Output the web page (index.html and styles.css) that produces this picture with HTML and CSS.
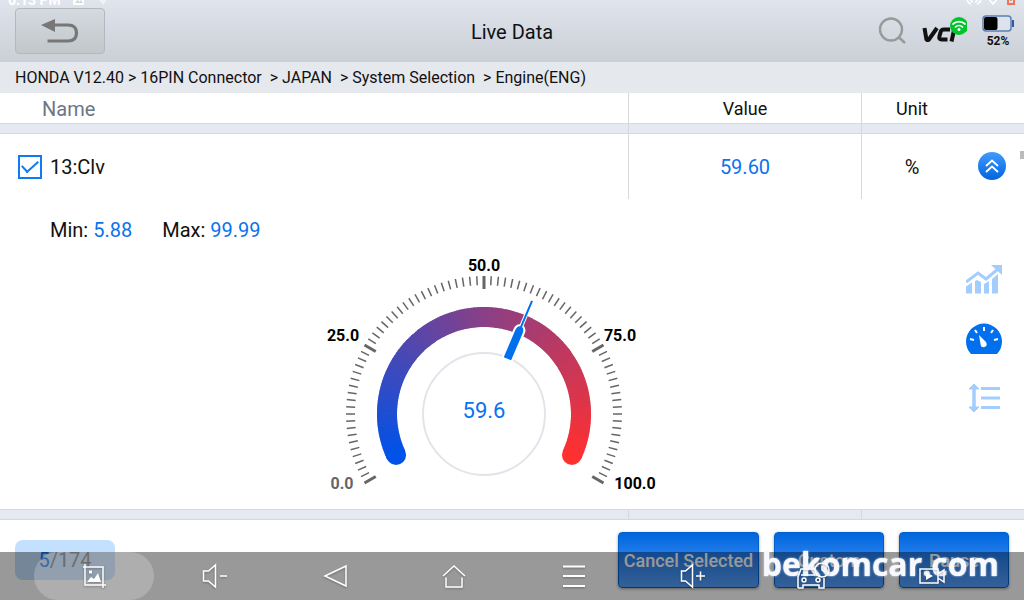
FILE: index.html
```html
<!DOCTYPE html>
<html lang="en">
<head>
<meta charset="utf-8">
<title>Live Data</title>
<link rel="stylesheet" href="styles.css">
</head>
<body>
<div class="app">
  <header class="topbar">
    <div class="status" aria-hidden="true">
      <span class="status-left">6:13 PM
        <svg width="12" height="14" viewBox="0 0 12 14"><rect x="0" y="1" width="11" height="12" rx="1" fill="#fff"/><path d="M2 11l2.500-3 2 2 1.500-2 2 3z" fill="#cfd5df"/></svg>
        <svg width="12" height="14" viewBox="0 0 12 14"><path d="M0 5a9 9 0 0 1 12 0L6 13z" fill="#fff" opacity=".5"/></svg>
      </span>
      <span class="status-right">
        <svg width="54" height="14" viewBox="0 0 54 14" fill="none" stroke="#fff" stroke-width="1.500"><path d="M5 6q0 5 4 6M8 6q0 3 3 4M19 6q0 5-4 6M16 6q0 3-3 4M26 6l5 6 5-6"/><rect x="46" y="2" width="6" height="10" stroke="#f0744f" stroke-width="2"/><path d="M49 5v4" stroke="#f0744f"/></svg>
      </span>
    </div>
    <button class="back" type="button" aria-label="Back">
      <svg width="38" height="26" viewBox="0 0 38 26"><path d="M13 7h14q8.500 0 8.500 8t-8.500 8H6.500" fill="none" stroke="#777" stroke-width="3.200"/><path d="M0 7L14 1v13z" fill="#777"/></svg>
    </button>
    <h1 class="title">Live Data</h1>
    <div class="tools">
      <button class="plain" type="button" aria-label="Search">
        <svg width="28" height="28" viewBox="0 0 28 28" fill="none" stroke="#999" stroke-width="2.400"><circle cx="13" cy="12.500" r="11"/><path d="M20.500 20l6.500 6"/></svg>
      </button>
      <div class="vci" role="img" aria-label="VCI connected">
        <svg width="46" height="30" viewBox="0 0 46 30"><g fill="none" stroke="#111" stroke-width="4"><path d="M3.500 12l2 12h2L16 12" stroke-linejoin="bevel"/><path d="M29 13.500h-6q-3 0-3.500 3l-1 3.500q-1 3.500 2 3.500h6"/><path d="M33.500 12l-3 13.500"/></g><circle cx="38" cy="10" r="9" fill="#00c42b"/><g fill="none" stroke="#fff" stroke-width="1.700" stroke-linecap="round"><path d="M32 8a9 9 0 0 1 12 0M34.500 11a5 5 0 0 1 7 0"/></g><circle cx="38" cy="13.500" r="1.500" fill="#fff"/></svg>
      </div>
      <div class="battery">
        <svg width="32" height="17" viewBox="0 0 32 17"><rect x="1" y="1" width="28" height="15" rx="3" fill="#dde3ec" stroke="#5e7fb0" stroke-width="1.500"/><rect x="30" y="5" width="2" height="7" fill="#345b98"/><rect x="2" y="2" width="13.500" height="13" rx="2"/></svg>
        <span>52%</span>
      </div>
    </div>
  </header>
  <nav class="crumbs" aria-label="Path">HONDA V12.40 &gt; 16PIN Connector  &gt; JAPAN  &gt; System Selection  &gt; Engine(ENG)</nav>
  <main class="content">
    <table class="data">
      <colgroup><col><col class="c-value"><col class="c-unit"><col class="c-more"></colgroup>
      <thead>
        <tr class="head"><th class="name">Name</th><th class="line">Value</th><th class="line">Unit</th><th></th></tr>
      </thead>
      <tbody>
        <tr class="strip"><td></td><td class="line"></td><td class="line"></td><td></td></tr>
        <tr class="item">
          <td><label class="pick"><input type="checkbox" checked><span>13:Clv</span></label></td>
          <td class="line num">59.60</td>
          <td class="line">%</td>
          <td class="more-cell"><button class="plain more" type="button" aria-label="Collapse">
            <svg width="28" height="28" viewBox="0 0 28 28"><defs><linearGradient id="mg" x2="0" y2="1"><stop stop-color="#429aff"/><stop offset="1" stop-color="#0065dd"/></linearGradient></defs><circle cx="14" cy="14" r="14" fill="url(#mg)"/><path d="M8 14l6-5.500 6 5.500M8 20l6-5.500 6 5.500" fill="none" stroke="#fff" stroke-width="1.800"/></svg>
          </button></td>
        </tr>
        <tr>
          <td colspan="4" class="detail-cell">
            <div class="range"><span>Min: <b>5.88</b></span><span>Max: <b>99.99</b></span></div>
            <div class="detail">
              <svg class="gauge" width="360" height="250" viewBox="0 0 360 250" role="img" aria-label="Gauge 59.6">
                <g id="ticks"></g>
                <g id="arc"></g>
                <circle cx="181" cy="164" r="61" fill="none" stroke="#e1e5ea" stroke-width="2"/>
                <g transform="rotate(23 181 164)">
                  <path d="M176 104V74q0-5 4-6V57h2v11q4 1 4 6v30z" fill="#fff" stroke="#fff" stroke-width="2"/>
                  <path d="M177 104V75q0-5 3-6V41h2v28q3 1 3 6v29z" fill="#0070ee"/>
                </g>
                <text class="reading" x="181" y="168">59.6</text>
                <g class="scale"><text class="low" x="39" y="239">0.0</text><text x="40" y="91">25.0</text><text x="181" y="21">50.0</text><text x="317" y="91">75.0</text><text x="332" y="239">100.0</text></g>
              </svg>
              <div class="views">
                <button class="plain" type="button" aria-label="Chart"><svg width="36" height="30" viewBox="0 0 36 30" fill="#a3cdff"><path d="M0 28.500v-7l6-4v11zM9 28.500V16l2-1 4 2v11.500zM18 28.500V19l5-3v12.500zM26 28.500V14l6-5v19.500z"/><path d="M0 17L12 8l8 6L32 4" fill="none" stroke="#a3cdff" stroke-width="3"/><path d="M25 0h11v10z"/></svg></button>
                <button class="plain" type="button" aria-label="Gauge"><svg width="36" height="32" viewBox="0 0 36 32"><path d="M5 31A18 18 0 1 1 31 31z" fill="#0070ee"/><g stroke="#fff" stroke-width="2"><path d="M18 4v4M9 7l2 3M27 7l-2 3M4 16l4 1M32 16l-4 1"/></g><path d="M13 12l7 7q2 4-1.500 5t-4-3z" fill="#fff"/></svg></button>
                <button class="plain" type="button" aria-label="List"><svg width="36" height="30" viewBox="0 0 36 30" fill="none" stroke="#a3cdff"><path d="M8 4v22" stroke-width="3.500"/><path d="M3 6l5-5 5 5zM3 24l5 5 5-5z" fill="#a3cdff" stroke-width="1"/><path d="M15 5.500h19M15 15h19M15 24.500h19" stroke-width="3"/></svg></button>
              </div>
            </div>
          </td>
        </tr>
        <tr class="strip"><td></td><td class="line"></td><td class="line"></td><td></td></tr>
      </tbody>
    </table>
    <div class="thumb"></div>
  </main>
  <footer class="actions">
    <div class="count"><b>5</b>/174</div>
    <div class="buttons">
      <button class="action wide" type="button">Cancel Selected</button>
      <button class="action" type="button">Custom</button>
      <button class="action" type="button">Pause</button>
    </div>
  </footer>
</div>
<nav class="sysbar" aria-label="System">
  <button class="plain shot" type="button" aria-label="Screenshot"><svg width="24" height="24" viewBox="0 0 24 24"><path d="M1 3h20v21M3 0v21h21"/><path class="solid" d="M5 18l4-5 3 2 4-6 3 9zM7 6.500h3v3H7z"/></svg></button>
  <button class="plain" type="button" aria-label="Volume down"><svg width="26" height="26" viewBox="0 0 26 26"><path d="M1.500 8h5l7-6v22l-7-6h-5zM18 13h7"/></svg></button>
  <button class="plain" type="button" aria-label="Back"><svg width="26" height="26" viewBox="0 0 26 26"><path d="M3 13L24 3v20z"/></svg></button>
  <button class="plain" type="button" aria-label="Home"><svg width="24" height="26" viewBox="0 0 24 26"><path d="M1 13L12 3l11 10M4 14.500V24h16v-9.500"/></svg></button>
  <button class="plain" type="button" aria-label="Menu"><svg width="24" height="26" viewBox="0 0 24 26"><path d="M1 3.500h22M1 13h22M1 23h22" stroke-width="2"/></svg></button>
  <button class="plain" type="button" aria-label="Volume up"><svg width="26" height="26" viewBox="0 0 26 26"><path d="M1.500 8h4l7-6v22l-7-6h-4zM16 13h9M20.500 8.500v9"/></svg></button>
  <button class="plain over" type="button" aria-label="Vehicle"><svg width="34" height="28" viewBox="0 0 34 28"><path d="M2 26V15l3-8h14M28 16v10h-5v-3H7v3H2M5 13h14"/><circle cx="8" cy="18" r="2"/><circle cx="22" cy="18" r="2"/><circle cx="26" cy="8" r="7"/><path d="M26 4v4l3 2"/></svg></button>
  <button class="plain over" type="button" aria-label="Record screen"><svg width="28" height="20" viewBox="0 0 28 20"><path d="M2 3h18v14H2zM20 8l6-4v12l-6-4"/><path class="solid" d="M8 6l7 4-7 4z"/></svg></button>
  <div class="brand">bekomcar.com</div>
</nav>
<script src="gauge.js"></script>
</body>
</html>
```
FILE: styles.css
```css
* { box-sizing: border-box; }
body {
  margin: 0;
  background: #fff;
  color: #111;
  font-family: Roboto, "Liberation Sans", sans-serif;
  font-size: 20px;
}
b { font-weight: 400; color: #0a73ee; }
svg { display: block; }
.plain { border: 0; padding: 0; background: none; color: inherit; }

.app { display: flex; flex-direction: column; min-height: 100vh; }

.topbar {
  position: relative;
  overflow: hidden;
  display: grid;
  grid-template-columns: 1fr auto 1fr;
  align-items: center;
  height: 62px;
  padding: 0 10px;
  background: linear-gradient(#dfe4ed, #cbcfd6);
}
.status {
  position: absolute;
  top: -8px;
  left: 8px;
  right: 8px;
  display: flex;
  justify-content: space-between;
  color: #fff;
  font-size: 14px;
  line-height: 16px;
  font-weight: 700;
}
.status-left { display: flex; gap: 12px; }
.back {
  display: grid;
  place-items: center;
  width: 90px;
  height: 46px;
  margin-left: 5px;
  border: 1px solid #b4b8bd;
  border-radius: 4px;
  background: linear-gradient(#d5dae1, #c2c7ca);
}
.title { margin: 0; padding-top: 2px; font-size: 20px; font-weight: 400; }
.tools {
  display: flex;
  justify-content: flex-end;
  align-items: center;
  gap: 15px;
}
.battery {
  display: flex;
  flex-direction: column;
  align-items: center;
  gap: 2px;
  font-size: 12px;
  line-height: 14px;
  font-weight: 700;
}

.crumbs {
  height: 31px;
  padding: 0 15px;
  background: #e5e8ed;
  font-size: 16px;
  line-height: 31px;
  white-space: pre;
}

.content { position: relative; flex: 1; }
.data {
  width: 100%;
  table-layout: fixed;
  border-collapse: separate;
  border-spacing: 0;
  text-align: center;
}
.data td, .data th { padding: 0; font-weight: 400; }
.data .line { border-left: 1px solid #d8d8d8; }
.c-value { width: 233px; }
.c-unit { width: 101px; }
.c-more { width: 62px; }
.data .head th { height: 30px; padding-top: 2px; font-size: 18px; line-height: 28px; }
.data .head .name {
  padding-left: 42px;
  text-align: left;
  font-size: 20px;
  color: #6c7685;
}
.strip td {
  height: 11px;
  background: #e5eaf2;
  border-top: 1px solid #d8d8d8;
  border-bottom: 1px solid #d8d8d8;
}
.item td { height: 65px; }
.num { color: #0a73ee; }
.pick { display: flex; align-items: center; gap: 8px; padding-left: 18px; }
.pick input {
  appearance: none;
  width: 24px;
  height: 24px;
  margin: 0;
  border: 2px solid #0f7af5;
  display: grid;
  place-items: center;
}
.pick input:checked::before {
  content: "";
  width: 14px;
  height: 7px;
  margin-bottom: 4px;
  border: solid #0f7af5;
  border-width: 0 0 2px 2px;
  transform: rotate(-42deg);
}
.data .more-cell { padding: 0 2px 2px 0; }
.more { display: inline-block; vertical-align: middle; }
.range {
  display: flex;
  gap: 30px;
  padding: 19px 50px 8px;
  line-height: 24px;
}
.detail { display: grid; grid-template-columns: 1fr 58px; height: 259px; }
.gauge { justify-self: center; }
.views { display: flex; flex-direction: column; gap: 28px; padding-top: 15px; }
.reading { font-size: 22px; fill: #0a73ee; text-anchor: middle; }
.scale { font-size: 16px; font-weight: 700; text-anchor: middle; }
.scale .low { fill: #666; }
.thumb {
  position: absolute;
  top: 58px;
  right: 0;
  width: 4px;
  height: 8px;
  background: #bbb;
}

.actions {
  display: flex;
  justify-content: space-between;
  align-items: flex-start;
  height: 80px;
  padding: 12px 15px 0;
}
.count {
  width: 100px;
  margin-top: 8px;
  border-radius: 8px;
  background: #c3e0ff;
  color: #777;
  line-height: 40px;
  text-align: center;
}
.buttons { display: flex; gap: 15px; }
.action {
  width: 110px;
  height: 56px;
  padding: 0;
  border: 1px solid #0060cc;
  border-radius: 4px;
  background: linear-gradient(#0065dd, #58a1ff);
  box-shadow: 0 1px 3px rgba(0, 0, 0, 0.4);
  color: #fff;
  font: 500 18px Roboto, "Liberation Sans", sans-serif;
}
.wide { width: 141px; }

.sysbar {
  position: fixed;
  left: 0;
  right: 0;
  bottom: 0;
  display: flex;
  height: 48px;
  padding: 0 32px;
  background: rgba(0, 0, 0, 0.4);
}
.sysbar .plain { flex: 1; display: grid; place-items: center; }
.sysbar svg {
  fill: none;
  stroke: #fff;
  stroke-width: 1.5;
  filter: drop-shadow(0 1px 1px rgba(0, 0, 0, 0.3));
}
.sysbar .solid { fill: #fff; stroke: none; }
.sysbar .shot { margin: 0 2px; border-radius: 24px; background: rgba(255, 255, 255, 0.2); }
.sysbar .over { position: relative; z-index: 1; }
.brand {
  position: absolute;
  right: 25px;
  bottom: 14px;
  color: #f7f9ff;
  font: 700 32px/44px "Open Sans", "Noto Sans", sans-serif;
  text-shadow: 0 0 2px #fff;
}
```
FILE: gauge.js
```js
const NS = "http://www.w3.org/2000/svg";
const CX = 181;
const CY = 164;

function point(radius, degrees) {
  const a = degrees * Math.PI / 180;
  return [CX + radius * Math.sin(a), CY - radius * Math.cos(a)];
}

function add(parent, name, attrs) {
  const el = document.createElementNS(NS, name);
  for (const key in attrs) el.setAttribute(key, attrs[key]);
  parent.appendChild(el);
}

// Scale marks, one every 3 degrees and a heavy one at each quarter
const ticks = document.getElementById("ticks");
for (let i = 0; i <= 80; i++) {
  const major = i % 20 === 0;
  const deg = i * 3 - 120;
  const [x1, y1] = point(major ? 125 : 129, deg);
  const [x2, y2] = point(138, deg);
  add(ticks, "line", { x1, y1, x2, y2, stroke: "#666", "stroke-width": major ? 3 : 1.5 });
}

// Coloured band from blue through purple to red
const stops = [[0, 82, 232], [138, 64, 134], [255, 48, 48]];
function colour(t) {
  const i = t < 0.5 ? 0 : 1;
  const k = t * 2 - i;
  return "rgb(" + stops[i].map((v, n) => Math.round(v + (stops[i + 1][n] - v) * k)) + ")";
}
const arc = document.getElementById("arc");
for (const [deg, t] of [[-115, 0], [115, 1]]) {
  const [cx, cy] = point(97, deg);
  add(arc, "circle", { cx, cy, r: 10, fill: colour(t) });
}
for (let d = -115; d < 115; d++) {
  const [x1, y1] = point(97, d);
  const [x2, y2] = point(97, Math.min(d + 1.5, 115));
  add(arc, "path", {
    d: `M${x1} ${y1}A97 97 0 0 1 ${x2} ${y2}`,
    fill: "none", stroke: colour((d + 115) / 230), "stroke-width": 20
  });
}
```
